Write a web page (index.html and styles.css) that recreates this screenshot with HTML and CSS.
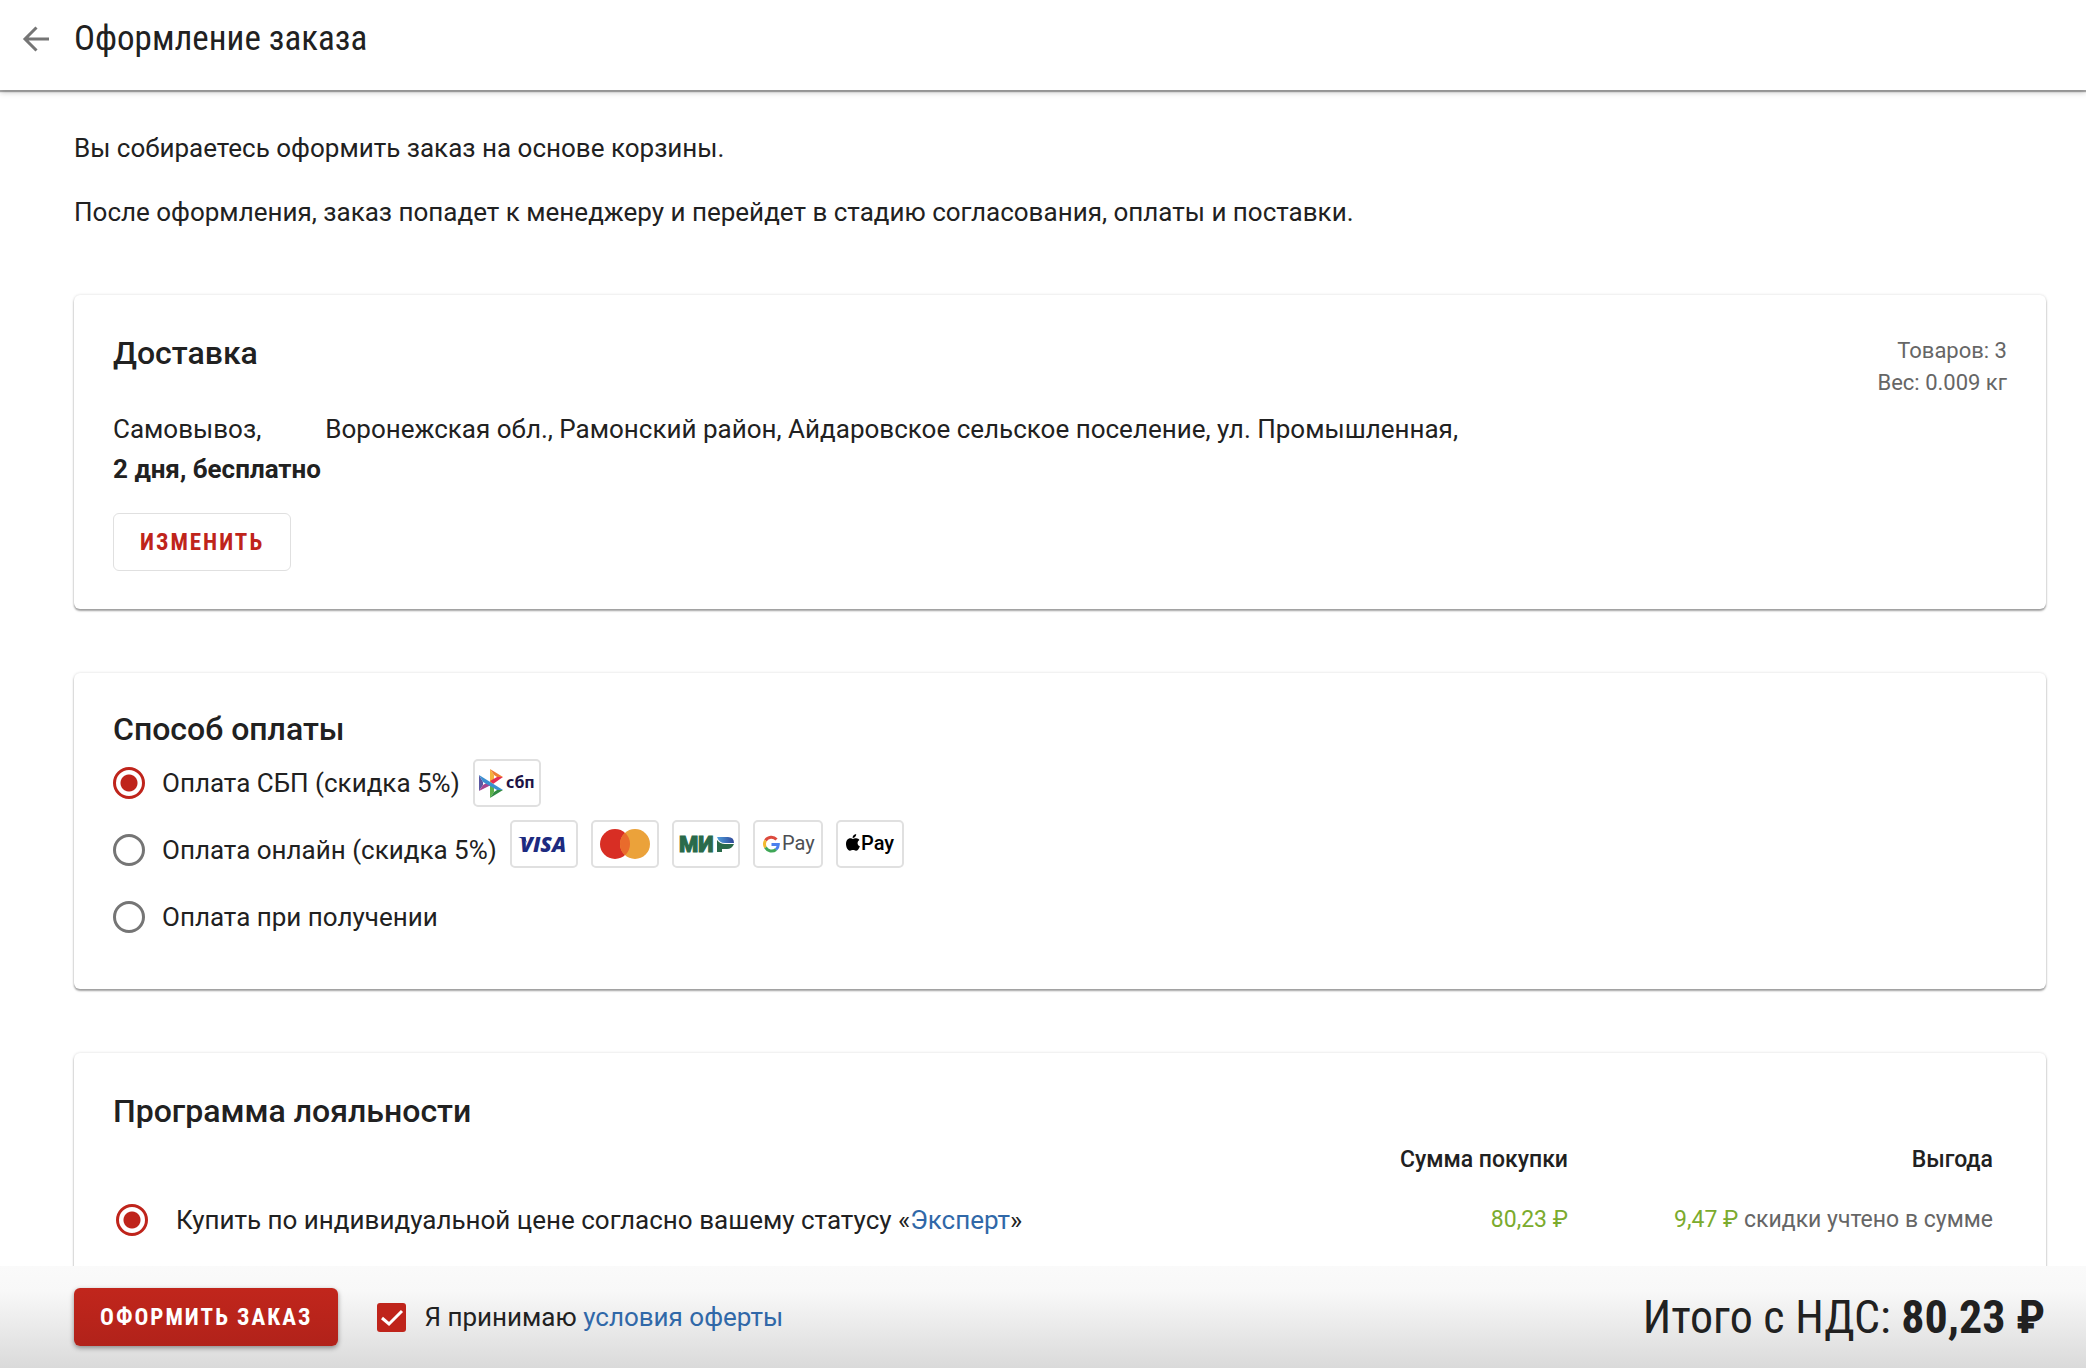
FILE: index.html
```html
<!DOCTYPE html>
<html lang="ru">
<head>
  <meta charset="UTF-8" />
  <meta name="viewport" content="width=device-width, initial-scale=1.0" />
  <title>Оформление заказа</title>
  <link rel="stylesheet" href="styles.css">
</head>
<body>
  <header class="topbar">
    <a href="#cart" class="back" aria-label="Назад">
      <svg width="32" height="32" viewBox="0 0 32 32" fill="none" stroke="#757575" stroke-width="3" aria-hidden="true">
        <path d="M29 16H5M16.500 4.500L5 16l11.500 11.500" />
      </svg>
    </a>
    <h1>Оформление заказа</h1>
  </header>

  <main class="content">
    <div class="intro">
      <p>Вы собираетесь оформить заказ на основе корзины.</p>
      <p>После оформления, заказ попадет к менеджеру и перейдет в стадию согласования, оплаты и поставки.</p>
    </div>

    <section class="card delivery">
      <div class="delivery-info">
        <h2>Доставка</h2>
        <p class="address"><span>Самовывоз,</span> <span>Воронежская обл., Рамонский район, Айдаровское сельское поселение, ул. Промышленная,</span></p>
        <p class="term">2 дня, бесплатно</p>
        <button type="button" class="btn btn-outline">Изменить</button>
      </div>
      <div class="summary">
        <p>Товаров: 3</p>
        <p>Вес: 0.009 кг</p>
      </div>
    </section>

    <section class="card payment">
      <h2>Способ оплаты</h2>
      <div class="option">
        <input type="radio" name="payment" id="pay-sbp" checked>
        <label for="pay-sbp">Оплата СБП (скидка 5%)</label>
        <div class="badges">
          <span class="badge">
            <svg width="56" height="32" viewBox="0 0 56 32" role="img" aria-label="СБП">
              <path d="M0 8l4 7v3l-4 6z" fill="#5b57a2" />
              <path d="M0 24l4-6 5-3 3 3z" fill="#a5458f" />
              <path d="M11 2l4 6v6l-4 3z" fill="#f4b23c" />
              <path d="M11 2l13 8h-6l-3-2z" fill="#ee7d34" />
              <path d="M24 10l-10 7-3-3 7-4z" fill="#e52d52" />
              <path d="M11 16l4 3v6l-4 6z" fill="#5cb04a" />
              <path d="M11 31l4-6 3-2h6z" fill="#2f8a43" />
              <path d="M0 8l24 15h-6L4 15z" fill="#3a8fd0" />
              <text x="27" y="21" class="logo-sbp">сбп</text>
            </svg>
          </span>
        </div>
      </div>
      <div class="option">
        <input type="radio" name="payment" id="pay-online">
        <label for="pay-online">Оплата онлайн (скидка 5%)</label>
        <div class="badges badges-cards">
          <span class="badge">
            <svg width="56" height="32" viewBox="0 0 56 32" role="img" aria-label="Visa">
              <path d="M2 9h7l2 6q-2-4-9-6z" fill="#1d2a80" />
              <text x="4" y="24" class="logo-visa">VISA</text>
            </svg>
          </span>
          <span class="badge">
            <svg width="56" height="32" viewBox="0 0 56 32" role="img" aria-label="Mastercard">
              <circle cx="18" cy="16" r="15" fill="#d82e24" />
              <circle cx="38" cy="16" r="15" fill="#eba23a" />
              <path d="M28 4.800a15 15 0 0 1 0 22.400a15 15 0 0 1 0-22.400z" fill="#e96b2c" />
            </svg>
          </span>
          <span class="badge">
            <svg width="56" height="32" viewBox="0 0 56 32" role="img" aria-label="МИР">
              <defs>
                <linearGradient id="mir">
                  <stop offset="0" stop-color="#4f9fdc" />
                  <stop offset="1" stop-color="#2f4699" />
                </linearGradient>
              </defs>
              <text x="1" y="24" class="logo-mir">МИ</text>
              <path d="M39 12q3 4 8 4h9q-2 5-7 5h-5v3h-5z" fill="#2a6a4a" />
              <path d="M39 9h11q6 0 6 6h-9q-6 0-8-6z" fill="url(#mir)" />
            </svg>
          </span>
          <span class="badge">
            <svg width="58" height="32" viewBox="0 0 58 32" fill="none" role="img" aria-label="Google Pay">
              <path d="M17.500 11.500A7 7 0 0 0 6.500 12.500" stroke="#dc4a3d" stroke-width="3" />
              <path d="M6.500 12.500a7 7 0 0 0 0 7" stroke="#f2b92f" stroke-width="3" />
              <path d="M6.500 19.500a7 7 0 0 0 10.500 2" stroke="#3fa757" stroke-width="3" />
              <path d="M12.500 16.500h6.800a7 7 0 0 1-2.300 5" stroke="#4a80ee" stroke-width="3" />
              <text x="23" y="22" class="logo-pay logo-gpay">Pay</text>
            </svg>
          </span>
          <span class="badge">
            <svg width="56" height="32" viewBox="0 0 56 32" role="img" aria-label="Apple Pay">
              <path d="M14.200 6c.2 2-1.600 4-3.600 4-.2-2 1.600-3.800 3.600-4zM10.900 10.900c.9 0 1.600-.7 3.300-.7 1.500 0 2.600.8 3.200 1.700-2.700 1.600-2.200 5.300.5 6.400-.9 2.400-2.300 4.500-3.900 4.500-1.200 0-1.600-.7-3-.7s-1.900.7-3 .7C5.700 22.800 4 19 4 16.100c0-3.700 2.200-5.800 4.300-5.800 1.100 0 2 .6 2.600.6z" fill="#000" />
              <text x="19" y="22" class="logo-pay">Pay</text>
            </svg>
          </span>
        </div>
      </div>
      <div class="option">
        <input type="radio" name="payment" id="pay-cash">
        <label for="pay-cash">Оплата при получении</label>
      </div>
    </section>

    <section class="card loyalty">
      <h2>Программа лояльности</h2>
      <table>
        <thead>
          <tr>
            <td></td>
            <th scope="col">Сумма покупки</th>
            <th scope="col">Выгода</th>
          </tr>
        </thead>
        <tbody>
          <tr>
            <td>
              <div class="loyalty-option">
                <input type="radio" name="loyalty" id="loyalty-status" checked>
                <label for="loyalty-status">Купить по индивидуальной цене согласно вашему статусу «<a href="#expert">Эксперт</a>»</label>
              </div>
            </td>
            <td class="num"><span class="green">80,23 ₽</span></td>
            <td class="num"><span class="green">9,47 ₽</span> скидки учтено в сумме</td>
          </tr>
        </tbody>
      </table>
    </section>
  </main>

  <footer class="checkout">
    <button type="submit" class="btn btn-primary">Оформить заказ</button>
    <div class="agree">
      <input type="checkbox" id="agree" checked>
      <label for="agree">Я принимаю <a href="#offer">условия оферты</a></label>
    </div>
    <p class="total">Итого с НДС: <strong>80,23 ₽</strong></p>
  </footer>
</body>
</html>
```
FILE: styles.css
```css
/* Variables & Reset */
:root {
  --red: #bf241b;
  --text: #212121;
  --text-light: #666666;
  --link: #3068a8;
  --green: #7bab2e;
  --border: #e0e0e0;
}
* { margin: 0; padding: 0; box-sizing: border-box; }
body { font-family: Roboto, 'Noto Sans', sans-serif; font-size: 26px; line-height: 40px; color: var(--text); background: #fff; }
a { color: var(--link); text-decoration: none; }

/* Header */
.topbar { display: flex; align-items: center; gap: 22px; height: 90px; padding: 0 20px 12px; box-shadow: 0 2px 1px rgba(0,0,0,0.3), 0 2px 6px rgba(0,0,0,0.25); }
.topbar h1 { font-family: 'Roboto Condensed', Roboto, sans-serif; font-size: 35px; font-weight: 400; }
.back { display: flex; }

.content { padding: 38px 40px 40px 74px; }
.intro { display: grid; gap: 24px; margin-bottom: 63px; }

/* Cards */
.card { padding: 38px 39px; margin-bottom: 64px; border-radius: 6px; box-shadow: 0 2px 2px rgba(0,0,0,0.35), 0 0 3px rgba(0,0,0,0.15); }
.card h2 { font-size: 32px; font-weight: 500; line-height: 40px; }

/* Delivery */
.delivery { display: flex; justify-content: space-between; }
.address { display: flex; flex-wrap: wrap; column-gap: 64px; margin-top: 36px; }
.term { font-weight: 700; }
.delivery .btn { margin-top: 24px; }
.summary { padding-top: 2px; font-size: 22px; line-height: 32px; color: var(--text-light); text-align: right; }

/* Buttons */
.btn { height: 58px; padding: 0 26px; border: 0; border-radius: 6px; font-family: 'Roboto Condensed', Roboto, sans-serif; font-size: 23px; font-weight: 700; letter-spacing: 2px; text-transform: uppercase; cursor: pointer; }
.btn-outline { border: 1px solid var(--border); background: #fff; color: var(--red); }
.btn-primary { background: linear-gradient(#c1261c, #b1221a); color: #fff; box-shadow: 0 2px 5px rgba(0,0,0,0.4); }

/* Form controls */
input[type="radio"] { appearance: none; flex: none; width: 32px; height: 32px; border: 3px solid #757575; border-radius: 50%; }
input[type="radio"]:checked { border-color: var(--red); background: radial-gradient(circle, var(--red) 8px, transparent 9px); }
input[type="checkbox"] { appearance: none; flex: none; width: 29px; height: 29px; border-radius: 3px; background: var(--red); }
input[type="checkbox"]:checked { background: var(--red) url("data:image/svg+xml,%3Csvg xmlns='http://www.w3.org/2000/svg' viewBox='0 0 29 29'%3E%3Cpath d='M5 15l7 6L25 8' fill='none' stroke='%23fff' stroke-width='3'/%3E%3C/svg%3E"); }

/* Payment */
.card.payment { padding-top: 36px; padding-bottom: 39px; }
.option { display: flex; align-items: center; height: 67px; }
.option label { margin-left: 17px; }
.badges { display: flex; gap: 13px; margin-left: 13px; }
.badges-cards { align-self: flex-start; padding-top: 4px; }
.badge { display: flex; align-items: center; height: 48px; padding: 0 4px; border: 2px solid var(--border); border-radius: 5px; }
.logo-sbp { font: 700 16px 'Noto Sans', sans-serif; fill: #1d1346; }
.logo-visa { font: italic 800 21px 'Open Sans', sans-serif; fill: #1d2a80; }
.logo-mir { font: 900 22px Roboto, sans-serif; fill: #2a6a4a; stroke: #2a6a4a; stroke-width: 1px; }
.logo-pay { font: 500 20px Roboto, sans-serif; fill: #000; }
.logo-gpay { font-weight: 400; fill: #4d4f53; }

/* Loyalty */
.loyalty table { width: 100%; margin-top: 9px; border-collapse: collapse; }
.loyalty th, .loyalty .num { width: 425px; padding-right: 14px; font-size: 23px; text-align: right; }
.loyalty th { font-weight: 500; }
.loyalty .num { color: var(--text-light); }
.loyalty .green { color: var(--green); }
.loyalty tbody td { padding-top: 20px; }
.loyalty-option { display: flex; align-items: center; gap: 28px; padding-left: 3px; }

/* Checkout bar */
.checkout { position: fixed; left: 0; right: 0; bottom: 0; display: flex; align-items: center; height: 102px; padding: 0 41px 0 74px; background: linear-gradient(#fafafa, #f8f8f8 25%, #dadada); }
.agree { display: flex; align-items: center; gap: 18px; margin-left: 39px; }
.total { margin-left: auto; font-family: 'Roboto Condensed', Roboto, sans-serif; font-size: 46px; }
```
